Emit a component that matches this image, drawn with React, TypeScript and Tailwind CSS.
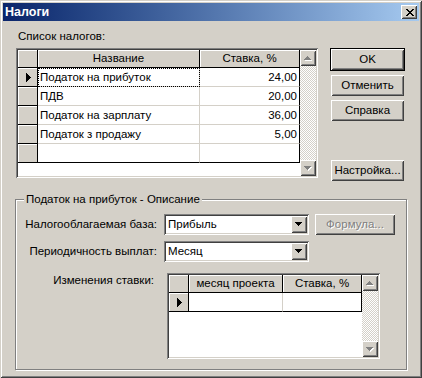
const raised =
  "shadow-[inset_1px_1px_#fff,inset_-1px_-1px_#404040,inset_2px_2px_#d4d0c8,inset_-2px_-2px_#808080]"
const sunken =
  "shadow-[inset_1px_1px_#808080,inset_-1px_-1px_#fff,inset_2px_2px_#404040,inset_-2px_-2px_#d4d0c8]"

function CloseGlyph() {
  const rows = ["XX....XX", ".XX..XX.", "..XXXX..", "...XX...", "..XXXX..", ".XX..XX.", "XX....XX"]
  return (
    <svg width="8" height="7" shapeRendering="crispEdges">
      {rows.map((r, y) =>
        r.split("").map((c, x) => (c === "X" ? <rect key={`${x}-${y}`} x={x} y={y} width="1" height="1" fill="#000" /> : null))
      )}
    </svg>
  )
}

// pixel triangle, 7 wide 4 tall
function Arrow({ dir, disabled }: { dir: "up" | "down"; disabled?: boolean }) {
  const rects = dir === "up" ? [[3, 0, 1], [2, 1, 3], [1, 2, 5], [0, 3, 7]] : [[0, 0, 7], [1, 1, 5], [2, 2, 3], [3, 3, 1]]
  return (
    <svg width="8" height="5" shapeRendering="crispEdges">
      {disabled && rects.map(([x, y, w], i) => <rect key={"s" + i} x={x + 1} y={y + 1} width={w} height="1" fill="#fff" />)}
      {rects.map(([x, y, w], i) => (
        <rect key={i} x={x} y={y} width={w} height="1" fill={disabled ? "#808080" : "#000"} />
      ))}
    </svg>
  )
}

function RowPointer() {
  return (
    <svg width="5" height="9" shapeRendering="crispEdges">
      {[1, 2, 3, 4, 5, 4, 3, 2, 1].map((w, y) => (
        <rect key={y} x="0" y={y} width={w} height="1" fill="#000" />
      ))}
    </svg>
  )
}

function ScrollBar() {
  return (
    <div className="flex w-[16px] flex-col bg-[repeating-conic-gradient(#fff_0_25%,#d4d0c8_0_50%)] bg-[length:2px_2px]">
      <div className={`flex h-[16px] w-[16px] items-center justify-center bg-[#d4d0c8] ${raised}`}>
        <Arrow dir="up" disabled />
      </div>
      <div className="flex-1" />
      <div className={`flex h-[16px] w-[16px] items-center justify-center bg-[#d4d0c8] ${raised}`}>
        <Arrow dir="down" disabled />
      </div>
    </div>
  )
}

type Col = { title: string; width: number; align: "left" | "right" }

function DataGrid({
  cols,
  rows,
  width,
  height,
  focusFirst,
}: {
  cols: Col[]
  rows: string[][]
  width: number
  height: number
  focusFirst?: boolean
}) {
  return (
    <div className={`flex bg-white p-[2px] ${sunken}`} style={{ width, height }}>
      <div className="flex-1 overflow-hidden">
        {/* header */}
        <div className="flex h-[18px]">
          <div className="h-[18px] w-[20px] border-r border-b border-black bg-[#d4d0c8] shadow-[inset_1px_1px_#fff]" />
          {cols.map((c) => (
            <div
              key={c.title}
              className="flex h-[18px] items-center justify-center border-r border-b border-black bg-[#d4d0c8] shadow-[inset_1px_1px_#fff]"
              style={{ width: c.width }}
            >
              {c.title}
            </div>
          ))}
        </div>
        {rows.map((r, ri) => (
          <div key={ri} className="flex h-[19px]">
            <div className="flex w-[20px] items-center justify-center border-r border-b border-black bg-[#d4d0c8] pl-[1px] shadow-[inset_1px_1px_#fff]">
              {ri === 0 && <RowPointer />}
            </div>
            {cols.map((c, ci) => (
              <div
                key={ci}
                className={`relative flex items-center border-b px-[2px] ${
                  ri === rows.length - 1 ? "border-b-black" : "border-b-[#d4d0c8]"
                } ${ci === cols.length - 1 ? "border-r border-r-black" : "border-r border-r-[#d4d0c8]"} ${
                  c.align === "right" ? "justify-end" : ""
                }`}
                style={{ width: c.width }}
              >
                {r[ci]}
                {focusFirst && ri === 0 && ci === 0 && (
                  <div className="absolute inset-[0_-1px_-1px_0] border border-dotted border-black" />
                )}
              </div>
            ))}
          </div>
        ))}
      </div>
      <ScrollBar />
    </div>
  )
}

function Button({ label, isDefault, disabled, w = 73 }: { label: string; isDefault?: boolean; disabled?: boolean; w?: number }) {
  const inner = (
    <div
      className={`flex h-[21px] items-center justify-center bg-[#d4d0c8] ${raised} ${
        disabled ? "text-[#808080] [text-shadow:1px_1px_#fff]" : ""
      }`}
      style={{ width: w }}
    >
      {label}
    </div>
  )
  if (isDefault) return <div className="border border-black">{inner}</div>
  return inner
}

function Combo({ value }: { value: string }) {
  return (
    <div className={`flex h-[21px] w-[145px] items-center bg-white p-[2px] ${sunken}`}>
      <div className="flex-1 pl-[2px]">{value}</div>
      <div className={`flex h-[17px] w-[16px] items-center justify-center bg-[#d4d0c8] ${raised}`}>
        <Arrow dir="down" />
      </div>
    </div>
  )
}

export default function App() {
  return (
    <div
      className="h-[378px] w-[422px] bg-[#d4d0c8] p-[3px] text-[11.5px] leading-[13px] text-black shadow-[inset_1px_1px_#d4d0c8,inset_-1px_-1px_#404040,inset_2px_2px_#fff,inset_-2px_-2px_#808080]"
      style={{ fontFamily: '"Liberation Sans", Arial, sans-serif' }}
    >
      {/* title bar */}
      <div className="flex h-[18px] items-center bg-gradient-to-r from-[#0a246a] to-[#a6caf0] pl-[2px] pr-[2px]">
        <span className="text-[12.5px] font-bold text-white">Налоги</span>
        <div className={`ml-auto flex h-[14px] w-[16px] items-center justify-center bg-[#d4d0c8] pl-[1px] ${raised}`}>
          <CloseGlyph />
        </div>
      </div>

      {/* body */}
      <div className="flex flex-col pt-[9px] pl-[13px]">
        <div className="flex">
          <div className="flex w-[302px] flex-col">
            <div className="mb-[5px] ml-[2px] h-[13px]">Список налогов:</div>
            <DataGrid
              width={302}
              height={130}
              focusFirst
              cols={[
                { title: "Название", width: 162, align: "left" },
                { title: "Ставка, %", width: 100, align: "right" },
              ]}
              rows={[
                ["Податок на прибуток", "24,00"],
                ["ПДВ", "20,00"],
                ["Податок на зарплату", "36,00"],
                ["Податок з продажу", "5,00"],
                ["", ""],
              ]}
            />
          </div>
          <div className="ml-[12px] flex flex-col pt-[18px]">
            <Button label="OK" isDefault />
            <div className="mt-[4px] ml-[1px] flex flex-col gap-[4px]">
              <Button label="Отменить" />
              <Button label="Справка" />
            </div>
            <div className="mt-[39px] ml-[1px]">
              <Button label="Настройка..." />
            </div>
          </div>
        </div>

        {/* group box */}
        <div className="relative mt-[18px] ml-[-1px] h-[171px] w-[392px] border border-[#808080] shadow-[inset_1px_1px_#fff,1px_1px_#fff]">
          <div className="absolute top-[-7px] left-[8px] bg-[#d4d0c8] px-[2px]">Податок на прибуток - Описание</div>
          <div className="flex flex-col pt-[14px]">
            <div className="flex items-center">
              <div className="w-[141px] text-right">Налогооблагаемая база:</div>
              <div className="ml-[7px]">
                <Combo value="Прибыль" />
              </div>
              <div className="ml-[6px]">
                <Button label="Формула..." disabled w={80} />
              </div>
            </div>
            <div className="mt-[6px] flex items-center">
              <div className="w-[141px] text-right">Периодичность выплат:</div>
              <div className="ml-[7px]">
                <Combo value="Месяц" />
              </div>
            </div>
            <div className="mt-[11px] flex">
              <div className="mt-[1px] w-[138px] text-right">Изменения ставки:</div>
              <div className="ml-[13px]">
                <DataGrid
                  width={213}
                  height={86}
                  cols={[
                    { title: "месяц проекта", width: 94, align: "left" },
                    { title: "Ставка, %", width: 79, align: "right" },
                  ]}
                  rows={[["", ""]]}
                />
              </div>
            </div>
          </div>
        </div>
      </div>
    </div>
  )
}
